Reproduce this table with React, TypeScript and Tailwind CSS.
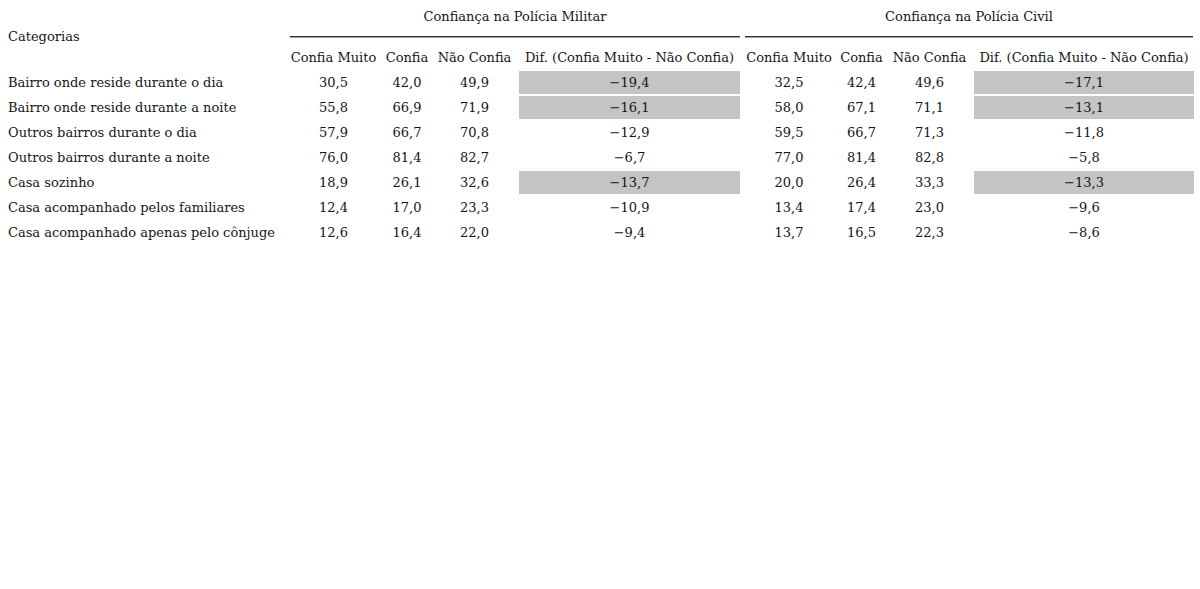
import React from "react";

const rows = [
  ["Bairro onde reside durante o dia", "30,5", "42,0", "49,9", "−19,4", true, "32,5", "42,4", "49,6", "−17,1", true],
  ["Bairro onde reside durante a noite", "55,8", "66,9", "71,9", "−16,1", true, "58,0", "67,1", "71,1", "−13,1", true],
  ["Outros bairros durante o dia", "57,9", "66,7", "70,8", "−12,9", false, "59,5", "66,7", "71,3", "−11,8", false],
  ["Outros bairros durante a noite", "76,0", "81,4", "82,7", "−6,7", false, "77,0", "81,4", "82,8", "−5,8", false],
  ["Casa sozinho", "18,9", "26,1", "32,6", "−13,7", true, "20,0", "26,4", "33,3", "−13,3", true],
  ["Casa acompanhado pelos familiares", "12,4", "17,0", "23,3", "−10,9", false, "13,4", "17,4", "23,0", "−9,6", false],
  ["Casa acompanhado apenas pelo cônjuge", "12,6", "16,4", "22,0", "−9,4", false, "13,7", "16,5", "22,3", "−8,6", false],
] as const;

const headers = [
  "Confia Muito",
  "Confia",
  "Não Confia",
  "Dif. (Confia Muito - Não Confia)",
  "Confia Muito",
  "Confia",
  "Não Confia",
  "Dif. (Confia Muito - Não Confia)",
];

function Spanner({ label, pad }: { label: string; pad: string }) {
  return (
    <th colSpan={4} className={`font-normal align-top p-0 ${pad}`}>
      <div className="pt-[8px] leading-[18px] h-[26px] whitespace-nowrap">{label}</div>
      <div className="mt-[10px] h-px bg-[#333333]" />
      <div className="h-px bg-[#a0a0a0]" />
      <div className="h-[8px]" />
    </th>
  );
}

export default function App() {
  return (
    <div
      className="w-[1200px] h-[589px] bg-white text-[#151515] text-[13px]"
      style={{ fontFamily: "'DejaVu Serif', serif" }}
    >
      <table className="border-collapse table-fixed w-[1197px]">
        <colgroup>
          <col className="w-[286px]" />
          <col className="w-[95px]" />
          <col className="w-[52px]" />
          <col className="w-[83px]" />
          <col className="w-[227px]" />
          <col className="w-[92px]" />
          <col className="w-[53px]" />
          <col className="w-[83px]" />
          <col className="w-[226px]" />
        </colgroup>
        <thead>
          <tr className="h-[46px]">
            <th rowSpan={2} className="text-left font-normal pl-2 pt-[4px] align-middle p-0">
              Categorias
            </th>
            <Spanner label="Confiança na Polícia Militar" pad="pl-[4px] pr-[3px]" />
            <Spanner label="Confiança na Polícia Civil" pad="pl-[2px] pr-[4px]" />
          </tr>
          <tr className="h-[24px]">
            {headers.map((h, i) => (
              <th key={i} className="font-normal text-center whitespace-nowrap p-0">
                {h}
              </th>
            ))}
          </tr>
        </thead>
        <tbody>
          {rows.map((r, i) => (
            <tr key={i} className="h-[25px]">
              <td className="pl-2 whitespace-nowrap p-0">{r[0]}</td>
              <td className="text-center p-0">{r[1]}</td>
              <td className="text-center p-0">{r[2]}</td>
              <td className="text-center p-0">{r[3]}</td>
              <td className="text-center p-0">
                <div className={`mx-[3px] h-[23px] leading-[23px] ${r[5] ? "bg-[#c4c4c4]" : ""}`}>{r[4]}</div>
              </td>
              <td className="text-center p-0">{r[6]}</td>
              <td className="text-center p-0">{r[7]}</td>
              <td className="text-center p-0">{r[8]}</td>
              <td className="text-center p-0">
                <div className={`mx-[3px] h-[23px] leading-[23px] ${r[10] ? "bg-[#c4c4c4]" : ""}`}>{r[9]}</div>
              </td>
            </tr>
          ))}
        </tbody>
      </table>
    </div>
  );
}
